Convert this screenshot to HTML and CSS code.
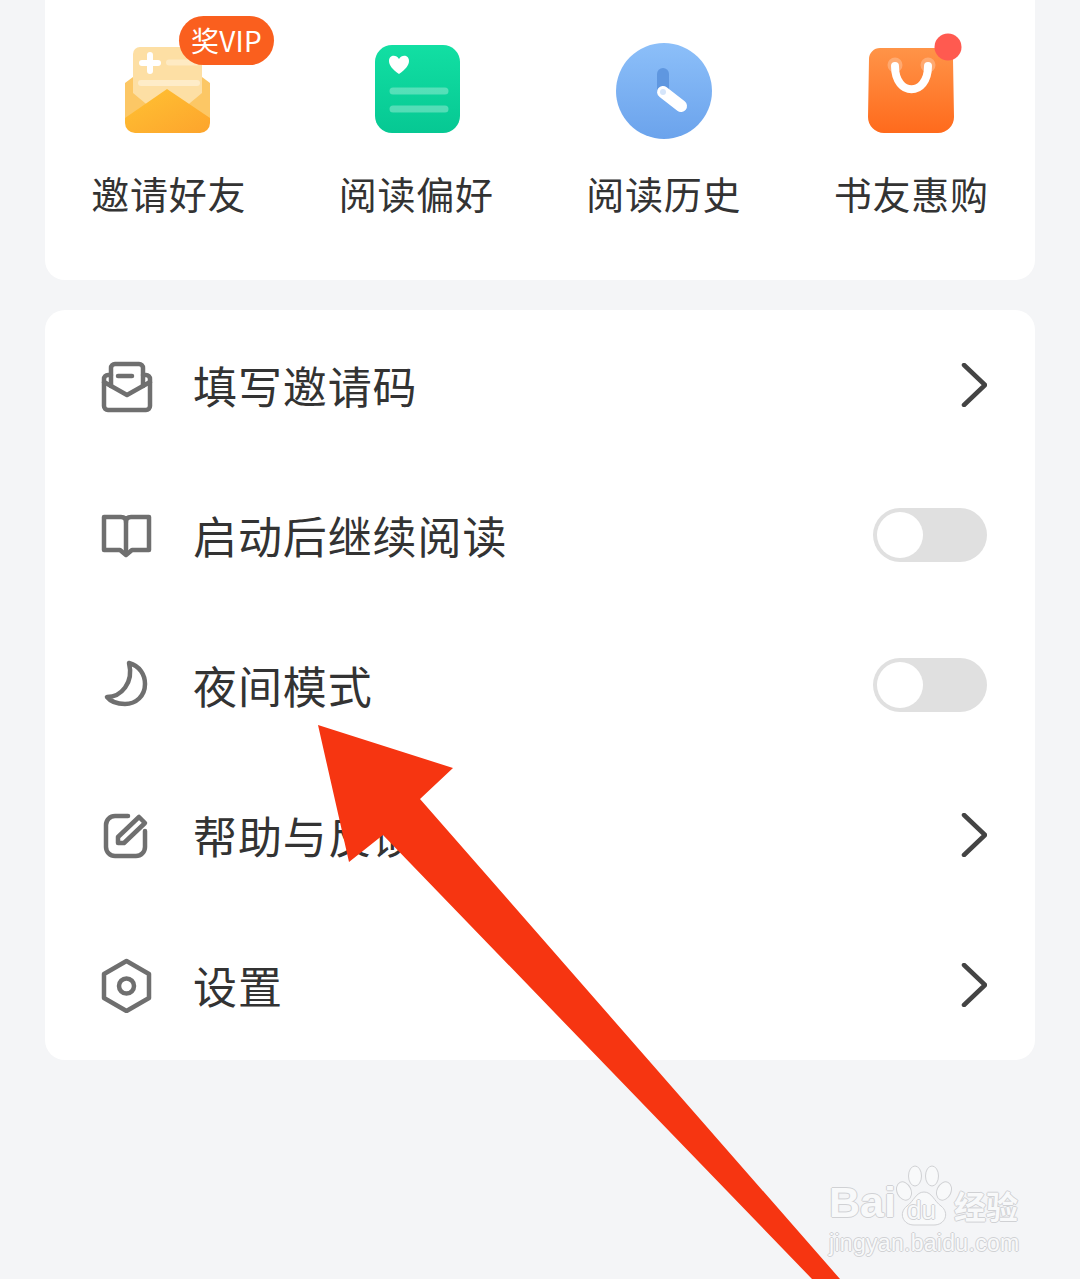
FILE: index.html
```html
<!DOCTYPE html>
<html lang="zh-CN">
<head>
  <meta charset="UTF-8">
  <title>我的</title>
  <link rel="stylesheet" href="styles.css">
</head>
<body>

<div class="screen">
  <div class="card shortcuts">
    <div class="shortcut">
      <svg class="shortcut-icon" viewBox="0 0 96 96">
        <defs>
          <linearGradient id="envFront" x1="0" y1="0" x2="1" y2="1">
            <stop offset="0" stop-color="#ffc233"/>
            <stop offset="1" stop-color="#fda42c"/>
          </linearGradient>
          <linearGradient id="green" x1="0" y1="0" x2="0" y2="1">
            <stop offset="0" stop-color="#12dfa3"/>
            <stop offset="1" stop-color="#06c893"/>
          </linearGradient>
          <linearGradient id="blue" x1="0" y1="0" x2="0" y2="1">
            <stop offset="0" stop-color="#8cbff9"/>
            <stop offset="1" stop-color="#6ba3ec"/>
          </linearGradient>
          <linearGradient id="bag" x1="0" y1="0" x2="0" y2="1">
            <stop offset="0" stop-color="#ff9448"/>
            <stop offset="1" stop-color="#ff6a1c"/>
          </linearGradient>
        </defs>
        <path d="M12 12 a7 7 0 0 1 7-7 H74 a7 7 0 0 1 7 7 V68 H12Z" fill="#fddfa4"/>
        <path d="M29 13 V29 M21 21 H37" stroke="#fff" stroke-width="6" stroke-linecap="round"/>
        <path d="M48 20.500 H76" stroke="#fff" stroke-opacity=".35" stroke-width="6" stroke-linecap="round"/>
        <path d="M20 41 H76" stroke="#fff" stroke-opacity=".4" stroke-width="6" stroke-linecap="round"/>
        <path d="M12 35 L4 41 V80 L30 66 L12 51Z M81 35 L89 41 V80 L63 66 L81 51Z" fill="#fcc765"/>
        <path d="M4 76 L46 47 L89 76 V81 a10 10 0 0 1 -10 10 H14 a10 10 0 0 1 -10-10Z" fill="url(#envFront)"/>
      </svg>
      <span class="badge">奖VIP</span>
      <div class="shortcut-label">邀请好友</div>
    </div>
    <div class="shortcut">
      <svg class="shortcut-icon" viewBox="0 0 96 96">
        <rect x="7" y="3" width="85" height="88" rx="17" fill="url(#green)"/>
        <path d="M31 32 C24 27 21 23 21 19 C21 13 28 12 31 17 C34 12 41 13 41 19 C41 23 38 27 31 32Z" fill="#fff"/>
        <path d="M25 49 H77 M25 67 H77" stroke="#fff" stroke-opacity=".3" stroke-width="7" stroke-linecap="round"/>
      </svg>
      <div class="shortcut-label">阅读偏好</div>
    </div>
    <div class="shortcut">
      <svg class="shortcut-icon" viewBox="0 0 96 96">
        <circle cx="48" cy="49" r="48" fill="url(#blue)"/>
        <path d="M47 32 V50" stroke="#5f97e0" stroke-width="12" stroke-linecap="round"/>
        <path d="M47 50 L65 64" stroke="#fff" stroke-width="12" stroke-linecap="round"/>
        <circle cx="47" cy="50" r="3" fill="#d5e5fa"/>
      </svg>
      <div class="shortcut-label">阅读历史</div>
    </div>
    <div class="shortcut">
      <svg class="shortcut-icon" viewBox="0 0 96 96">
        <path d="M17 6 H79 a11 11 0 0 1 11 11 L91 75 a16 16 0 0 1 -16 16 H21 a16 16 0 0 1 -16-16 L6 17 a11 11 0 0 1 11-11Z" fill="url(#bag)"/>
        <circle cx="32" cy="23" r="7.500" fill="#fff" fill-opacity=".25"/>
        <circle cx="65" cy="23" r="7.500" fill="#fff" fill-opacity=".25"/>
        <path d="M32 24 C32 55 65 55 65 24" fill="none" stroke="#fff" stroke-width="8" stroke-linecap="round"/>
        <circle cx="85" cy="5" r="13.500" fill="#ff5a50"/>
      </svg>
      <div class="shortcut-label">书友惠购</div>
    </div>
  </div>

  <div class="card menu">
    <div class="menu-row">
      <svg class="menu-icon" viewBox="0 0 56 56">
        <path d="M13 18 H10 a4 4 0 0 0 -4 4 V49 a4 4 0 0 0 4 4 H48 a4 4 0 0 0 4-4 V22 a4 4 0 0 0 -4-4 H45"/>
        <path d="M13 29 V11 a4 4 0 0 1 4-4 H41 a4 4 0 0 1 4 4 V29"/>
        <path d="M6 25 L29 38 L52 25"/>
        <path d="M20 19 H34"/>
      </svg>
      <span class="menu-text">填写邀请码</span>
      <svg class="chevron" viewBox="0 0 26 44"><path d="M3 2 L24 22 L3 42"/></svg>
    </div>
    <div class="menu-row">
      <svg class="menu-icon" viewBox="0 0 56 56">
        <path d="M28 15 V45"/>
        <path d="M6 10 H23 Q28 10 28 15 Q28 10 33 10 H51 V43 H34 L28 48 L22 43 H6Z"/>
      </svg>
      <span class="menu-text">启动后继续阅读</span>
      <span class="toggle"><span class="toggle-knob"></span></span>
    </div>
    <div class="menu-row">
      <svg class="menu-icon" viewBox="0 0 56 56">
        <path d="M31 6 C42 9 47 18 47 27 C47 39 38 47 27 47 C19 47 13 45 9 40 C23 40 36 26 31 6Z"/>
      </svg>
      <span class="menu-text">夜间模式</span>
      <span class="toggle"><span class="toggle-knob"></span></span>
    </div>
    <div class="menu-row">
      <svg class="menu-icon" viewBox="0 0 56 56">
        <path d="M30 9 H17 a9 9 0 0 0 -9 9 V40 a9 9 0 0 0 9 9 H38 a9 9 0 0 0 9-9 V24"/>
        <path d="M20 36 V30 L41 10 L47 16 L26 36Z"/>
      </svg>
      <span class="menu-text">帮助与反馈</span>
      <svg class="chevron" viewBox="0 0 26 44"><path d="M3 2 L24 22 L3 42"/></svg>
    </div>
    <div class="menu-row">
      <svg class="menu-icon" viewBox="0 0 56 56">
        <path d="M28.500 4 L51 17 V41 L28.500 54 L6 41 V17Z"/>
        <circle cx="28.500" cy="29" r="7.500"/>
      </svg>
      <span class="menu-text">设置</span>
      <svg class="chevron" viewBox="0 0 26 44"><path d="M3 2 L24 22 L3 42"/></svg>
    </div>
  </div>

  <!-- red arrow drawn on top of the screenshot -->
  <svg class="arrow" viewBox="0 0 1080 1279">
    <path d="M318 725 L453 768 L420 799 L840 1279 L812 1279 L383 835 L349 862Z" fill="#f63511"/>
  </svg>

  <div class="watermark">
    <div class="wm-logo">
      <span>Bai</span>
      <span class="wm-paw">
        <svg viewBox="0 0 56 62">
          <ellipse cx="8" cy="26" rx="7" ry="9.500" transform="rotate(-25 8 26)"/>
          <ellipse cx="19" cy="11" rx="6.500" ry="10"/>
          <ellipse cx="36" cy="11" rx="6.500" ry="10"/>
          <ellipse cx="48" cy="26" rx="7" ry="9.500" transform="rotate(25 48 26)"/>
          <path d="M28 27 C36 27 38 36 45 41 C54 48 49 60 38 60 H18 C7 60 2 48 11 41 C18 36 20 27 28 27Z"/>
        </svg>
        <span class="wm-du">du</span>
      </span>
      <span class="wm-cn">经验</span>
    </div>
    <div class="wm-url">jingyan.baidu.com</div>
  </div>
</div>

</body>
</html>
```

FILE: styles.css
```css
body {
  margin: 0;
  background-color: #f4f5f7;
  font-family: "Noto Sans CJK SC", "Noto Sans", sans-serif;
  color: #333;
}

.screen {
  position: relative;
  width: 1080px;
  height: 1279px;
  overflow: hidden;
  display: flex;
  flex-direction: column;
  gap: 30px;
}

.card {
  margin: 0 45px;
  background-color: #fff;
  border-radius: 20px;
}

.shortcuts {
  display: grid;
  grid-template-columns: repeat(4, 1fr);
  height: 280px;
  box-sizing: border-box;
  padding-top: 42px;
  border-top-left-radius: 0;
  border-top-right-radius: 0;
}

.shortcut {
  position: relative;
  display: flex;
  flex-direction: column;
  align-items: center;
}

.shortcut-icon {
  width: 96px;
  height: 96px;
  overflow: visible;
}

.shortcut-label {
  margin-top: 30px;
  font-size: 38px;
  line-height: 50px;
  letter-spacing: 0.8px;
  white-space: nowrap;
}

.badge {
  position: absolute;
  left: 134px;
  top: -26px;
  width: 95px;
  height: 49px;
  border-radius: 25px;
  background-color: #fa5f1e;
  color: #fff;
  font-size: 28px;
  line-height: 49px;
  letter-spacing: 0.3px;
  text-align: center;
}

.menu {
  display: flex;
  flex-direction: column;
}

.menu-row {
  height: 150px;
  display: flex;
  align-items: center;
  padding: 0 48px 0 53px;
}

.menu-icon {
  width: 56px;
  height: 56px;
  flex: none;
  fill: none;
  stroke: #6f6f6f;
  stroke-width: 4.5;
  stroke-linejoin: round;
  stroke-linecap: round;
}

.menu-text {
  margin-left: 39px;
  flex: 1;
  font-size: 44px;
  line-height: 60px;
  letter-spacing: 0.9px;
}

.chevron {
  width: 26px;
  height: 44px;
  fill: none;
  stroke: #444;
  stroke-width: 4.5;
  stroke-linecap: round;
  stroke-linejoin: round;
}

.toggle {
  width: 114px;
  height: 54px;
  box-sizing: border-box;
  padding: 4px;
  border-radius: 27px;
  background-color: #e0e0e0;
}

.toggle-knob {
  display: block;
  width: 46px;
  height: 46px;
  border-radius: 50%;
  background-color: #fff;
}

.arrow {
  position: absolute;
  left: 0;
  top: 0;
  width: 1080px;
  height: 1279px;
}

.watermark {
  position: absolute;
  left: 829px;
  top: 1165px;
  width: 200px;
  color: #f8f9fa;
  font-family: "Liberation Sans", sans-serif;
  text-shadow: 1px 0 0 #d0d1d4, -1px 0 0 #d0d1d4, 0 1px 0 #d0d1d4, 0 -1px 0 #d0d1d4;
}

.wm-logo {
  display: flex;
  align-items: flex-end;
  height: 62px;
  font-size: 43px;
  font-weight: bold;
  line-height: 50px;
}

.wm-paw {
  position: relative;
  width: 56px;
  height: 62px;
}

.wm-paw svg {
  width: 56px;
  height: 62px;
  fill: #f8f9fa;
  stroke: #d0d1d4;
  stroke-width: 1;
}

.wm-du {
  position: absolute;
  left: 11px;
  bottom: 2px;
  font-size: 26px;
  line-height: 30px;
  font-weight: normal;
}

.wm-cn {
  margin-left: 2px;
  font-family: "Noto Sans CJK SC", sans-serif;
  font-size: 32px;
  font-weight: bold;
  line-height: 44px;
}

.wm-url {
  margin-top: 3px;
  font-size: 23px;
  line-height: 26px;
  letter-spacing: 0.3px;
  white-space: nowrap;
}
```
